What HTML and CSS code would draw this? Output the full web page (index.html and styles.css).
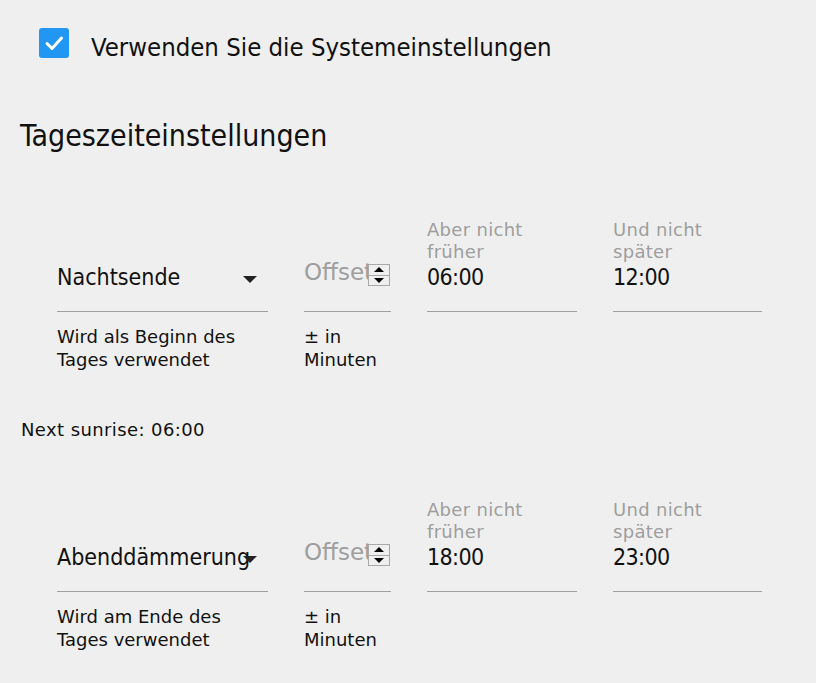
FILE: index.html
```html
<!DOCTYPE html>
<html lang="de">

<head>
    <meta charset="UTF-8">
    <meta name="viewport" content="width=device-width, initial-scale=1.0">
    <title>Tageszeiteinstellungen</title>
    <link rel="stylesheet" href="styles.css">
</head>

<body>
    <div class="page">
        <label class="system">
            <span class="checkbox">
                <svg viewBox="0 0 30 30" width="30" height="30">
                    <path d="M8 15.5 L13 20.5 L22.5 10" fill="none" stroke="#fff" stroke-width="3" stroke-linecap="round" stroke-linejoin="round" />
                </svg>
            </span>
            <span class="system-label">Verwenden Sie die Systemeinstellungen</span>
        </label>

        <h2 class="title">Tageszeiteinstellungen</h2>

        <div class="rule">
            <div class="field select">
                <div class="value">Nachtsende</div>
                <span class="arrow"></span>
            </div>
            <div class="field offset">
                <div class="value placeholder">Offset</div>
                <span class="spinner"><span class="up"></span><span class="down"></span></span>
            </div>
            <div class="field">
                <div class="label">Aber nicht<br>früher</div>
                <div class="value time">06:00</div>
            </div>
            <div class="field">
                <div class="label">Und nicht<br>später</div>
                <div class="value time">12:00</div>
            </div>
            <div class="helper">Wird als Beginn des<br>Tages verwendet</div>
            <div class="helper">± in<br>Minuten</div>
        </div>

        <div class="next">Next sunrise: 06:00</div>

        <div class="rule">
            <div class="field select">
                <div class="value">Abenddämmerung</div>
                <span class="arrow"></span>
            </div>
            <div class="field offset">
                <div class="value placeholder">Offset</div>
                <span class="spinner"><span class="up"></span><span class="down"></span></span>
            </div>
            <div class="field">
                <div class="label">Aber nicht<br>früher</div>
                <div class="value time">18:00</div>
            </div>
            <div class="field">
                <div class="label">Und nicht<br>später</div>
                <div class="value time">23:00</div>
            </div>
            <div class="helper">Wird am Ende des<br>Tages verwendet</div>
            <div class="helper">± in<br>Minuten</div>
        </div>
    </div>
</body>

</html>
```

FILE: styles.css
```css
* {
    box-sizing: border-box;
}

body {
    margin: 0;
    background-color: #efefef;
    color: #111;
    font-family: 'DejaVu Sans Condensed', 'DejaVu Sans', sans-serif;
}

.page {
    padding: 28px 0 0 0;
}

.system {
    display: flex;
    align-items: flex-start;
    padding-left: 39px;
    gap: 22px;
}

.checkbox {
    width: 30px;
    height: 30px;
    border-radius: 3px;
    background-color: #2196f3;
    display: block;
}

.checkbox svg {
    display: block;
}

.system-label {
    font-size: 25.5px;
    line-height: 30px;
    padding-top: 4px;
}

.title {
    font-size: 30px;
    font-weight: normal;
    line-height: 36px;
    margin: 56px 0 0 20px;
}

.rule {
    display: grid;
    grid-template-columns: 211px 87px 150px 149px;
    column-gap: 36px;
    align-items: end;
    padding-left: 57px;
    margin-top: 65px;
}

.field {
    position: relative;
    border-bottom: 1px solid #a0a0a0;
    padding-bottom: 20px;
}

.label {
    color: #9e9e9e;
    font-family: 'DejaVu Sans', sans-serif;
    font-size: 18px;
    line-height: 22px;
    letter-spacing: 0.3px;
}

.value {
    font-size: 23px;
    line-height: 28px;
    white-space: nowrap;
}

.time {
    letter-spacing: -0.6px;
}

.placeholder {
    color: #9e9e9e;
    font-family: 'DejaVu Sans', sans-serif;
    margin-bottom: 5px;
    overflow: hidden;
}

.arrow {
    position: absolute;
    right: 11px;
    top: 13px;
    width: 0;
    height: 0;
    border-left: 7px solid transparent;
    border-right: 7px solid transparent;
    border-top: 7px solid #222;
}

.spinner {
    position: absolute;
    right: 1px;
    top: 6px;
    width: 22px;
    height: 22px;
    display: flex;
    flex-direction: column;
    border: 1px solid #a8a8a8;
    background-color: #efefef;
}

.spinner span {
    flex: 1;
    display: flex;
    align-items: center;
    justify-content: center;
}

.spinner .up {
    border-bottom: 1px solid #a8a8a8;
}

.spinner .up::before,
.spinner .down::before {
    content: '';
    width: 0;
    height: 0;
    border-left: 5px solid transparent;
    border-right: 5px solid transparent;
}

.spinner .up::before {
    border-bottom: 5px solid #000;
}

.spinner .down::before {
    border-top: 5px solid #000;
}

.helper {
    font-family: 'DejaVu Sans', sans-serif;
    font-size: 18px;
    line-height: 23px;
    margin-top: 13px;
    align-self: start;
}

.next {
    font-family: 'DejaVu Sans', sans-serif;
    font-size: 18px;
    line-height: 22px;
    letter-spacing: 0.4px;
    margin: 48px 0 0 21px;
}

.next + .rule {
    margin-top: 58px;
}
```
